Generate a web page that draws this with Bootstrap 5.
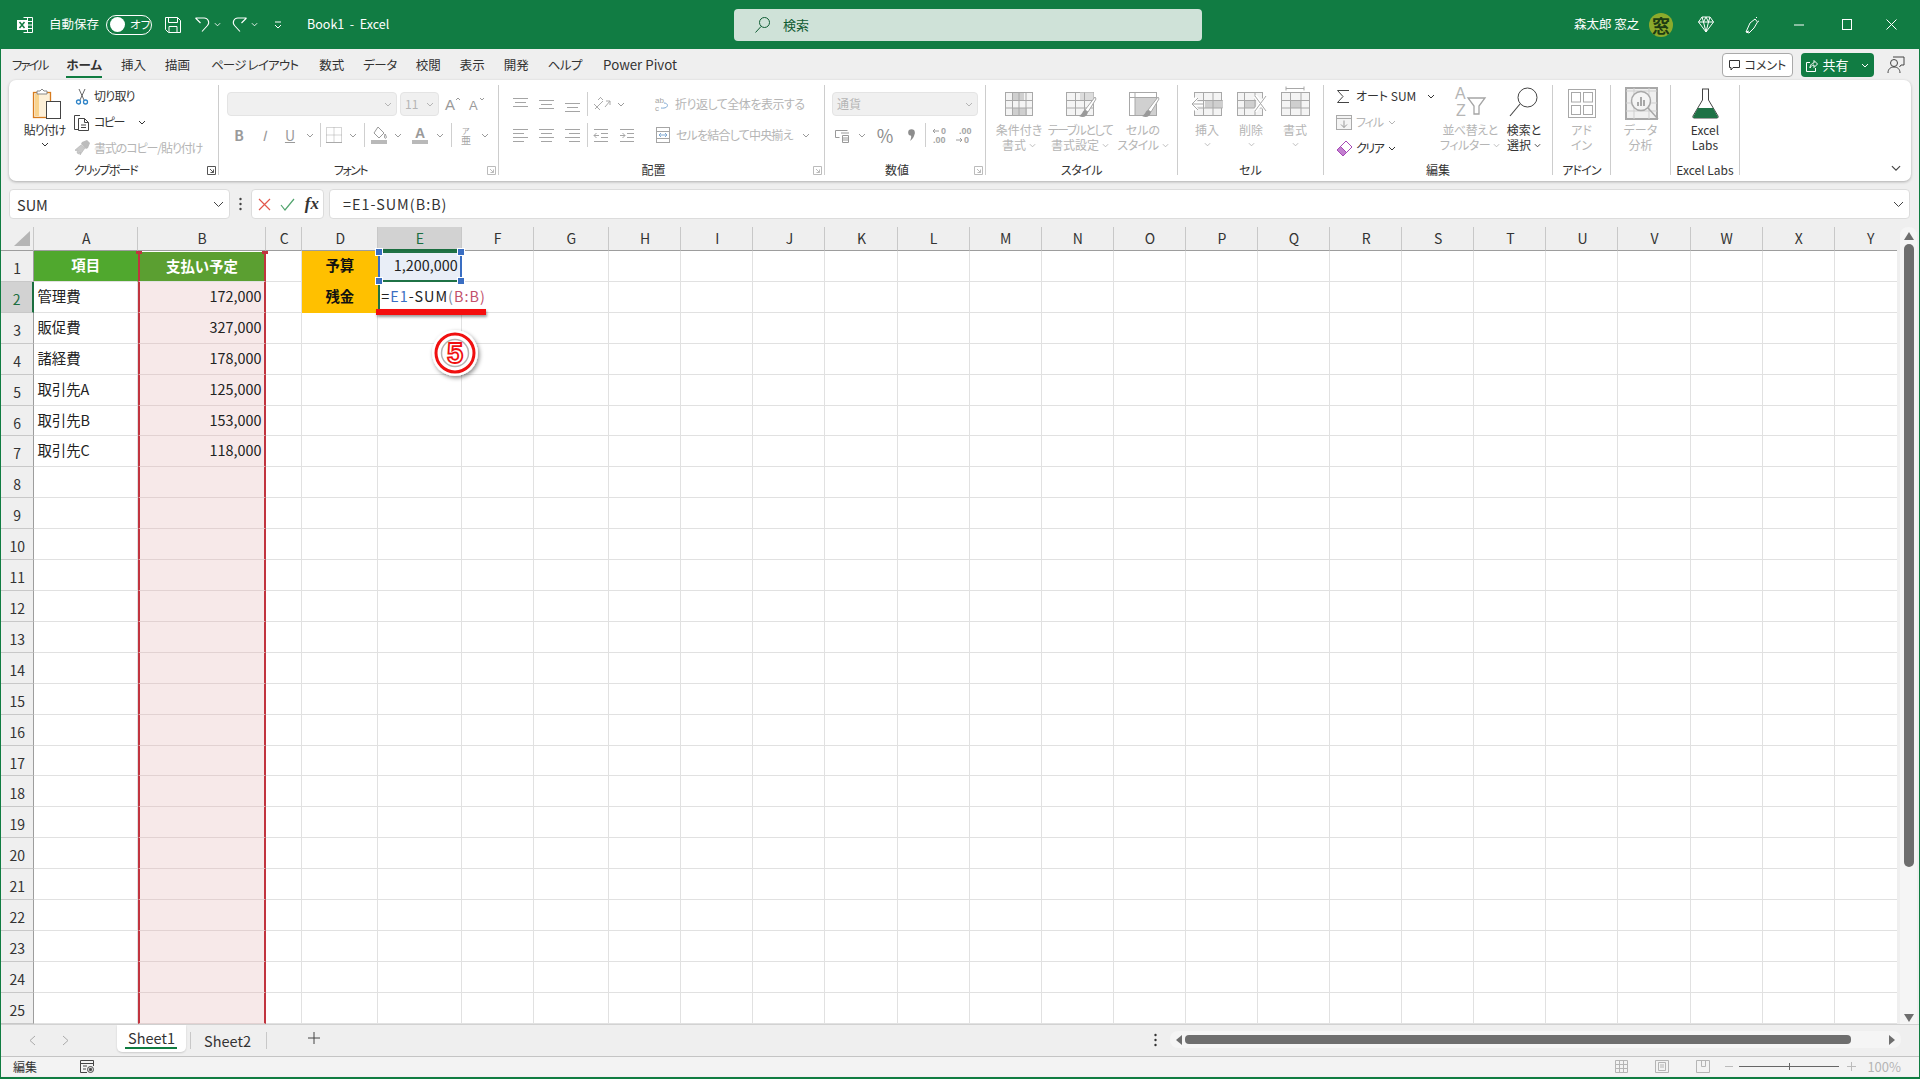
<!DOCTYPE html>
<html lang="ja">
<head>
<meta charset="UTF-8">
<meta name="viewport" content="width=device-width, initial-scale=1">
<title>Book1 - Excel</title>
<link href="https://cdn.jsdelivr.net/npm/bootstrap@5.3.3/dist/css/bootstrap.min.css" rel="stylesheet">
<style>
  html, body { height: 100%; overflow: hidden; }
  body { font-family: "Noto Sans CJK JP", "Noto Sans", sans-serif; font-size: 12.5px; color: #333; background: #efefef; position: relative; }
  svg { display: block; flex-shrink: 0; overflow: visible; }
  .app { height: 1079px; border: 0 solid #107c41; border-width: 0 1px 2px 1px; display: flex; flex-direction: column; }
  .k0 { letter-spacing: -.5px; } .k1 { letter-spacing: -.8px; } .k2 { letter-spacing: -1.1px; } .k3 { letter-spacing: -1.5px; } .k4 { letter-spacing: -2px; }

  /* title bar */
  .title-bar { height: 49px; background: #117c43; color: #fff; margin: 0 -1px; padding-left: 17px; flex-shrink: 0; font-feature-settings: "palt"; }
  .title-bar .lbl { font-size: 12.5px; }
  .t-auto { margin-left: 16px; }
  .t-toggle { margin-left: 7px; width: 46px; height: 20px; border: 1px solid #fff; border-radius: 10px; padding-left: 3px; gap: 5px; font-size: 11.5px; white-space: nowrap; }
  .t-knob { width: 15px; height: 15px; background: #fff; border-radius: 50%; flex-shrink: 0; }
  .t-save { margin-left: 13px; }
  .t-undo { margin-left: 14px; }
  .t-redo { margin-left: 11px; }
  .t-more { margin-left: 16px; }
  .t-name { margin-left: 25px; width: 427px; font-size: 12.5px; white-space: pre; }
  .t-search { width: 468px; height: 32px; background: #cfe2d8; border-radius: 4px; padding-left: 21px; gap: 13px; color: #0f5c33; font-size: 13px; }
  .t-user { margin-left: 372px; font-size: 12.5px; width: 66px; white-space: pre; }
  .t-avatar { width: 24px; height: 24px; border-radius: 50%; background: #8cab2c; color: #1c3b12; font-size: 18px; line-height: 24px; text-align: center; margin-left: 9px; font-weight: 700; overflow: hidden; }
  .t-gem { margin-left: 25px; }
  .t-pen { margin-left: 31px; }
  .t-min { margin-left: 32px; }
  .t-max { margin-left: 35px; }
  .t-close { margin-left: 33px; }

  /* ribbon tabs */
  .tab-row { height: 31px; padding: 1px 0 0 11px; gap: 19px; flex-shrink: 0; font-size: 12.5px; font-feature-settings: "palt"; align-items: center; }
  .tab-on { font-weight: 700; position: relative; }
  .tab-on::after { content: ""; position: absolute; left: 0; right: 0; bottom: -4px; height: 2px; background: #107c41; }
  .tab-wide { margin-left: 2px; }
  .tab-pp { margin-left: 2px; font-size: 13.3px; }
  .tab-btns { margin-left: auto; padding-right: 14px; letter-spacing: 0; }
  .b-comment { width: 71px; height: 24px; background: #fff; border: 1px solid #a9a9a9; border-radius: 4px; gap: 4px; font-size: 12px; justify-content: center; }
  .b-share { width: 73px; height: 24px; background: #117c43; color: #fff; border-radius: 4px; margin-left: 8px; gap: 4px; font-size: 13px; justify-content: center; }
  .b-person { margin-left: 13px; }

  /* ribbon */
  .ribbon { height: 101px; width: 1902px; margin-left: 8px; background: #fff; border-radius: 7px; box-shadow: 0 1px 3px rgba(0,0,0,.28); padding-top: 5px; flex-shrink: 0; font-feature-settings: "palt"; font-size: 12px; }
  .rgroup { height: 90px; border-right: 1px solid #cdcdcd; display: flex; flex-direction: column; flex-shrink: 0; }
  .rbody { flex: 1 1 auto; display: flex; min-height: 0; }
  .rtitle { height: 16px; line-height: 21px; font-size: 12px; text-align: center; color: #333; position: relative; flex-shrink: 0; }
  .has-launch { padding-right: 16px; }
  .launch { position: absolute; right: 2px; top: 7px; }
  .g-clip { width: 210px; } .g-font { width: 280px; } .g-align { width: 326px; } .g-num { width: 161px; }
  .g-style { width: 192px; } .g-cell { width: 146px; } .g-edit { width: 229px; } .g-addin { width: 58px; }
  .g-data { width: 60px; } .g-labs { width: 69px; }
  .off { color: #b5b5b5; }
  .big { display: flex; flex-direction: column; align-items: center; line-height: 15px; margin-top: -2px; flex-shrink: 0; white-space: nowrap; }
  .big-ico { height: 39px; }
  .big .chev { display: inline-block; margin-left: 3px; vertical-align: 2px; }
  .big > .chev { margin: 5px 0 0; }
  .w60 { width: 60px; } .w62 { width: 62px; } .w64 { width: 64px; } .w44 { width: 44px; } .w48 { width: 48px; }
  .p-paste { margin-left: 15px; width: 41px; }
  .small-col { margin: -2px 0 0 9px; }
  .small-row { height: 26px; display: flex; align-items: center; white-space: nowrap; }
  .small-row svg:first-child { margin-right: 4px; width: 16px; }
  .rows2 { padding: 7px 0 0 8px; }
  .row1, .row2 { height: 24px; display: flex; align-items: center; white-space: nowrap; }
  .row2 { margin-top: 7px; }
  .combo { height: 24px; background: #f0f0f0; border: 1px solid #e4e4e4; border-radius: 4px; display: flex; align-items: center; justify-content: space-between; padding: 0 4px; color: #b5b5b5; }
  .combo-name { width: 170px; justify-content: flex-end; } .combo-size { width: 39px; margin-left: 3px; } .combo-num { width: 146px; }
  .ib { display: flex; align-items: center; justify-content: center; flex-shrink: 0; color: #9a9a9a; font-weight: 700; font-size: 14px; }
  .txt-pct { font-size: 18px; color: #8d8d8d; }
  .bw10 { width: 10px; } .bw12 { width: 12px; } .bw14 { width: 14px; } .bw18 { width: 18px; } .bw20 { width: 20px; }
  .bw24 { width: 24px; } .bw26 { width: 26px; } .bw28 { width: 28px; } .bw30 { width: 30px; }
  .vsep { width: 1px; height: 24px; background: #cfcfcf; flex-shrink: 0; }
  .ml2 { margin-left: 2px; } .ml3 { margin-left: 3px; } .ml5 { margin-left: 5px; } .ml6 { margin-left: 6px; } .ml16 { margin-left: 16px; } .ml29 { margin-left: 29px; }
  .g-align .rows2 { padding-left: 8px; }
  .g-num .rows2 { padding-left: 7px; }
  .g-style .rbody { padding-left: 3px; } .g-cell .rbody { padding-left: 7px; }
  .e-left { margin: -2px 0 0 12px; width: 110px; flex-shrink: 0; }
  .rib-collapse { margin: 80px 0 0 auto; padding-right: 0; transform: translateX(-9px); }
  .e-sum-chev { margin-left: 11px; }
  .c-copy-chev { margin-left: 14px; }
  .tiny-chev { margin-left: 5px; }

  /* formula bar */
  .fbar { height: 30px; margin: 8px 8px 8px 8px; flex-shrink: 0; }
  .fbox { height: 30px; background: #fff; border: 1px solid #dcdcdc; border-radius: 4px; display: flex; align-items: center; }
  .f-name { width: 221px; padding: 1px 5px 0 7px; justify-content: space-between; font-size: 14.5px; }
  .f-dots { width: 21px; }
  .f-btns { width: 73px; justify-content: space-between; padding: 0 4px 0 6px; }
  .f-fx { font-family: "Liberation Serif", serif; font-style: italic; font-weight: 700; font-size: 17px; }
  .f-main { width: 1581px; margin-left: 5px; padding: 0 5px 0 13px; justify-content: space-between; font-size: 14.4px; letter-spacing: 1px; }

  /* sheet */
  .sheet-wrap { height: 797px; flex-shrink: 0; }
  .sheet { width: 1896px; height: 797px; overflow: hidden; background: #fff; display: grid; grid-auto-rows: 30.92px; grid-template-rows: 24px;
    grid-template-columns: 33.4px 103.6px 128px 36.3px 76px 83.4px 72px 75.5px repeat(18, 72.1px); font-size: 14.4px; color: #222; }
  .sc { border-right: 1px solid #e1e1e1; border-bottom: 1px solid #e1e1e1; padding: 0 3px; line-height: 28px; white-space: nowrap; position: relative; }
  .hc { background: #efefef; border-right: 1px solid #c8c8c8; border-bottom: 1px solid #9d9d9d; line-height: 22px; padding: 0 0 0 1px; text-align: center; font-size: 14px; color: #333; }
  .hr { background: #efefef; border-right: 1px solid #9d9d9d; border-bottom: 1px solid #c8c8c8; line-height: 34px; padding: 0; text-align: center; font-size: 14px; color: #333; }
  .hsel { background: #d2d2d2; color: #1b6e40; }
  .hc.hsel { border-bottom: 2px solid #1b6e40; }
  .hr.hsel { border-right: 2px solid #1b6e40; }
  .corner { display: flex; align-items: flex-end; justify-content: flex-end; padding: 0 3px 4px 0; }
  .colb { background: #f7e9e9; border-left: 2px solid #c1343f; border-right: 2px solid #c1343f; border-bottom-color: #e2d2d2; text-align: right; padding-right: 2.500px; }
  .numr { text-align: right; padding-right: 1px; }
  .hd-a { background: #50a82e; color: #fff; font-weight: 700; text-align: center; border-right-color: #50a82e; }
  .hd-b { background: #5b9f31; color: #fff; font-weight: 700; text-align: center; border-top: 1px solid #fff; border-left: 2px solid #c1343f; border-right: 2px solid #c1343f; }
  .hd-b::before, .hd-b::after { content: ""; position: absolute; top: -1px; width: 6px; height: 3px; background: #c1343f; }
  .hd-b::before { left: -4px; } .hd-b::after { right: -4px; }
  .yel { background: #ffc000; color: #111; font-weight: 700; text-align: center; border-color: #ffc000; }
  .e-ref { background: #e9eef7; border-left: 2px solid #3a6ec2; border-right: 2px solid #3a6ec2; border-top: 2px solid #1f7246; border-bottom: 2px solid #1f7246; padding-right: 2px; line-height: 24px; }
  .dot { position: absolute; width: 6px; height: 6px; background: #3a6ec2; outline: 1px solid #fff; z-index: 3; }
  .d-tl { left: -4px; top: -4px; } .d-tr { right: -4px; top: -4px; } .d-bl { left: -4px; bottom: -4px; } .d-br { right: -4px; bottom: -4px; }
  .e-edit { border-left: 2px solid #1f7246; border-right: 0; padding-left: 1px; letter-spacing: 1px; z-index: 2; overflow: visible; }
  .f-blue { color: #3a6ec2; } .f-red { color: #c2506b; } .f-gray { color: #7d8aa0; }

  .vscroll { width: 17px; height: 797px; margin-left: 3px; background: #f5f5f5; border-radius: 8px 8px 0 0; align-items: center; padding-top: 5px; }
  .vthumb { width: 10px; height: 623px; background: #6e6e6e; border-radius: 5px; margin-top: 4px; }
  .varrow-down { margin-top: auto; margin-bottom: 2px; }

  /* sheet tabs */
  .tabs-bar { height: 32px; border-top: 1px solid #d2d2d2; background: #efefef; flex-shrink: 0; font-size: 14.500px; }
  .tb-nav { margin-left: 28px; gap: 26px; width: 88px; }
  .sheet-on { width: 69px; height: 27px; background: #fff; border-radius: 0 0 5px 5px; text-align: center; position: relative; line-height: 26px; box-shadow: 0 1px 2px rgba(0,0,0,.15); }
  .sheet-on::after { content: ""; position: absolute; left: 8px; right: 9px; bottom: 3px; height: 2px; background: #107c41; }
  .tb-sep { width: 1px; height: 17px; background: #c8c8c8; margin-top: 7px; }
  .sheet-off { width: 75px; text-align: center; line-height: 31px; padding-right: 2px; }
  .tb-plus { margin: 7px 0 0 41px; }
  .tb-dots { margin: 8px 0 0 834px; }
  .h-track { width: 731px; height: 17px; margin: 6px 0 0 13px; background: #f5f5f5; border-radius: 8px; padding: 0 6px; }
  .h-thumb { width: 666px; height: 9px; background: #6e6e6e; border-radius: 4px; margin: 0 auto 0 3px; }

  /* status bar */
  .status-bar { height: 20px; background: #f3f3f3; border-top: 1px solid #c4c4c4; flex-shrink: 0; padding-left: 12px; font-size: 12px; }
  .st-macro { margin-left: 43px; }
  .st-right { margin-left: auto; padding-right: 18px; color: #b5b5b5; }
  .st-right svg + svg { margin-left: 27px; }
  .st-minus { width: 8px; height: 1px; background: #bbb; margin: 0 6px 0 15px; }
  .st-slider { width: 100px; height: 1px; background: #666; position: relative; }
  .st-slider::after { content: ""; position: absolute; left: 50px; top: -3px; width: 1px; height: 7px; background: #666; }
  .st-pct { margin-left: 11px; font-size: 13px; }

  /* annotation */
  .note-bar { position: absolute; left: 376px; top: 309px; width: 110px; height: 6px; background: #f50d0d; box-shadow: 1px 2px 3px rgba(0,0,0,.4); z-index: 5; }
  .note-num { position: absolute; left: 430px; top: 328px; z-index: 5; }
</style>
</head>
<body>
<svg width="0" height="0" class="position-absolute">
  <symbol id="chev" viewBox="0 0 8 5"><path d="M1 1l3 3 3-3" fill="none" stroke="currentColor" stroke-width="1"/></symbol>
  <symbol id="launch" viewBox="0 0 9 9"><path d="M.5 8.500v-8h8v8zM3 3l3.500 3.500M6.500 3.500v3h-3" fill="none" stroke="currentColor"/></symbol>
</svg>

<div class="app">
  <!-- barra de titulo -->
  <header class="title-bar d-flex align-items-center">
    <svg width="16" height="16" viewBox="0 0 16 16"><path d="M6.500.5h9v15h-9M10.500.500v15M6.500 4.500h9M6.500 8h9M6.500 11.500h9" fill="none" stroke="#fff"/><rect y="3" width="10" height="10" fill="#fff"/><path d="M2.500 5l5 6M7.500 5l-5 6" stroke="#117c43" stroke-width="1.500"/></svg>
    <span class="lbl t-auto">自動保存</span>
    <span class="t-toggle d-flex align-items-center"><span class="t-knob"></span><span>オフ</span></span>
    <svg class="t-save" width="16" height="16" viewBox="0 0 16 16" fill="none" stroke="#fff"><path d="M.5.5h12l3 3v12h-12l-3-3zM3.500.5v5h9v-5M4 15.500v-6h8v6"/></svg>
    <svg class="t-undo" width="15" height="15" viewBox="0 0 15 15" fill="none" stroke="#fff" stroke-width="1.100"><path d="M.5 1H9a4.500 4.500 0 0 1 3.500 7.500L7 14.500M.5 1l5 5"/></svg>
    <svg class="ms-1 text-white" width="7" height="5"><use href="#chev"/></svg>
    <svg class="t-redo" width="15" height="15" viewBox="0 0 15 15" fill="none" stroke="#fff" stroke-width="1.100"><path d="M14.500 1H6a4.500 4.500 0 0 0-3.500 7.500L8 14.500M14.500 1l-5 5"/></svg>
    <svg class="ms-1 text-white" width="7" height="5"><use href="#chev"/></svg>
    <svg class="t-more text-white" width="8" height="8" viewBox="0 0 8 8"><path d="M1 1h6" stroke="#fff"/><use href="#chev" y="3" width="8" height="5"/></svg>
    <span class="t-name">Book1  -  Excel</span>
    <div class="t-search d-flex align-items-center">
      <svg width="15" height="16" viewBox="0 0 15 16" fill="none" stroke="#0f5c33"><circle cx="9.500" cy="5.500" r="5"/><path d="M6 9.500L.5 15.500"/></svg>
      <span>検索</span>
    </div>
    <span class="t-user">森太郎 窓之</span>
    <span class="t-avatar">窓</span>
    <svg class="t-gem" width="16" height="17" viewBox="0 0 16 17" fill="none" stroke="#fff"><path d="M4 1h8l3.500 5L8 16 .5 6zM.5 6h15M5.500 6L8 16l2.500-10M4 1l1.500 5L8 1l2.500 5L12 1"/></svg>
    <svg class="t-pen" width="15" height="18" viewBox="0 0 15 18" fill="none" stroke="#fff"><path d="M5 7l5-4 2.500 3L9 12l-5 5-3-1zM1 16l3-1M11 1l1 1M14 5l-1 .5"/></svg>
    <svg class="t-min" width="15" height="2"><path d="M2 1h10" stroke="#fff"/></svg>
    <svg class="t-max" width="11" height="11"><rect x=".5" y=".5" width="9" height="10" fill="none" stroke="#fff"/></svg>
    <svg class="t-close" width="11" height="11"><path d="M.5.5l10 10M10.500.5l-10 10" stroke="#fff"/></svg>
  </header>

  <!-- pestañas -->
  <nav class="tab-row d-flex">
    <span class="k4">ファイル</span><span class="tab-on">ホーム</span><span>挿入</span><span>描画</span><span class="k1 tab-wide">ページ レイアウト</span><span class="tab-wide">数式</span><span class="k0">データ</span><span>校閲</span><span>表示</span><span>開発</span><span class="k0">ヘルプ</span><span class="tab-pp">Power Pivot</span>
    <div class="tab-btns d-flex align-items-center">
      <span class="b-comment d-flex align-items-center"><svg width="12" height="12" viewBox="0 0 12 12" fill="none" stroke="#333"><path d="M.5 1.500h10v7H4L2 11V8.500H.5z"/></svg>コメント</span>
      <span class="b-share d-flex align-items-center"><svg width="12" height="13" viewBox="0 0 12 13" fill="none" stroke="#fff"><path d="M4 3.500H.5v9h9V9M4 9c0-4 3-5 4-5V1.500L11.500 5 8 8.500V6C6 6 5 7 4 9z"/></svg>共有<svg class="ms-2" width="8" height="5"><use href="#chev"/></svg></span>
      <svg class="b-person" width="18" height="18" viewBox="0 0 18 18" fill="none" stroke="#444"><circle cx="7" cy="7" r="3.500"/><path d="M1 17c0-4 2.500-6 6-6s6 2 6 6M6 1h11v8h-3l-1.500 2"/></svg>
    </div>
  </nav>

  <!-- cinta -->
  <section class="ribbon d-flex">
    <div class="rgroup g-clip">
      <div class="rbody">
        <div class="big p-paste">
          <svg class="big-ico" width="40" height="39" viewBox="0 0 40 39"><rect x="8.500" y="9.500" width="17" height="25" fill="#fdf0d8" stroke="#d77b1e" stroke-width="1.300"/><rect x="10" y="11" width="4" height="22" fill="#f9d38e"/><path d="M12 11v-3h3l2-2 2 2h3v3z" fill="#fff" stroke="#888"/><rect x="21.500" y="18.500" width="14" height="17" fill="#fff" stroke="#444"/></svg>
          <span class="k2">貼り付け</span>
          <svg class="chev" width="8" height="5"><use href="#chev"/></svg>
        </div>
        <div class="small-col">
          <div class="small-row"><svg height="17" viewBox="0 0 16 17" fill="none"><path d="M5 1l5 11M11 1L6 12" stroke="#666"/><circle cx="4.500" cy="14" r="2" stroke="#2e83c7" stroke-width="1.300"/><circle cx="11.500" cy="14" r="2" stroke="#2e83c7" stroke-width="1.300"/></svg><span class="k1">切り取り</span></div>
          <div class="small-row"><svg height="17" viewBox="0 0 16 17" fill="none" stroke="#444"><path d="M4 15.500H.5V1.500H6"/><path d="M4.500 4.500h6l4 4v8h-10zM10.500 4.500v4h4M7 11h5M7 13.500h5"/></svg><span class="k3">コピー</span><svg class="c-copy-chev" width="8" height="5"><use href="#chev"/></svg></div>
          <div class="small-row off"><svg height="16" viewBox="0 0 16 16"><path d="M8 2l5-2 3 3-2 5-2 1-5-5z" fill="#bcbcbc"/><path d="M7 5L1 10l1 1 2-1-1 3 2 1 1-2 0 3 5-7z" fill="#c9c9c9" stroke="#aaa" stroke-width=".5"/></svg><span class="k2">書式のコピー/貼り付け</span></div>
        </div>
      </div>
      <div class="rtitle has-launch k3">クリップボード<svg class="launch" width="9" height="9" color="#555"><use href="#launch"/></svg></div>
    </div>

    <div class="rgroup g-font">
      <div class="rbody rows2 flex-column">
        <div class="row1">
          <span class="combo combo-name"><svg width="8" height="5"><use href="#chev"/></svg></span>
          <span class="combo combo-size">11<svg width="8" height="5"><use href="#chev"/></svg></span>
          <svg class="ml6" width="16" height="16" viewBox="0 0 16 16"><text x="0" y="14" font-size="15" fill="#9a9a9a" font-family="Liberation Sans">A</text><path d="M11 4l2-2 2 2" fill="none" stroke="#999"/></svg>
          <svg class="ml6 ms-2" width="16" height="16" viewBox="0 0 16 16"><text x="0" y="14" font-size="13" fill="#9a9a9a" font-family="Liberation Sans">A</text><path d="M11 2l2 2 2-2" fill="none" stroke="#999"/></svg>
        </div>
        <div class="row2">
          <span class="ib bw24">B</span>
          <span class="ib bw26 fst-italic fw-normal">I</span>
          <span class="ib bw26 fw-normal text-decoration-underline">U</span>
          <span class="ib bw14"><svg width="8" height="5"><use href="#chev"/></svg></span>
          <span class="vsep ml3"></span>
          <span class="ib bw26"><svg width="16" height="16" viewBox="0 0 16 16" fill="none" stroke="#aaa" stroke-dasharray="1 1"><rect x=".5" y=".5" width="15" height="15"/><path d="M8 .5v15M.5 8h15"/><path d="M0 15.500h16" stroke-dasharray="none"/></svg></span>
          <span class="ib bw12"><svg width="8" height="5"><use href="#chev"/></svg></span>
          <span class="vsep ml5"></span>
          <span class="ib bw28"><svg width="17" height="18" viewBox="0 0 17 18"><path d="M7 1l6 6-5 5-5-5zM14 8c1 2 2 3 1 4s-2 0-1-4" fill="none" stroke="#999"/><rect y="14" width="16" height="4" fill="#b9b9b9"/></svg></span>
          <span class="ib bw10"><svg width="8" height="5"><use href="#chev"/></svg></span>
          <span class="ib bw30 ml2"><svg width="16" height="18" viewBox="0 0 16 18"><text x="3" y="12" font-size="14" fill="#9a9a9a" font-family="Liberation Sans">A</text><rect y="14" width="16" height="4" fill="#b9b9b9"/></svg></span>
          <span class="ib bw10"><svg width="8" height="5"><use href="#chev"/></svg></span>
          <span class="vsep ml6"></span>
          <span class="ib bw28 fw-normal"><svg width="10" height="17" viewBox="0 0 10 17"><text x="1" y="7" font-size="8" fill="#a5a5a5" font-family="Noto Sans CJK JP">ア</text><text x="0" y="17" font-size="10" fill="#a5a5a5" font-family="Noto Sans CJK JP">亜</text></svg></span>
          <span class="ib bw10"><svg width="8" height="5"><use href="#chev"/></svg></span>
        </div>
      </div>
      <div class="rtitle has-launch k3">フォント<svg class="launch" width="9" height="9" color="#bbb"><use href="#launch"/></svg></div>
    </div>

    <div class="rgroup g-align">
      <div class="rbody rows2 flex-column">
        <div class="row1">
          <span class="ib bw26"><svg width="15" height="16" stroke="#a5a5a5"><path d="M0 2.500h15M2 6.500h11M0 10.500h15"/></svg></span>
          <span class="ib bw26"><svg width="15" height="16" stroke="#a5a5a5"><path d="M0 4.500h15M2 8.500h11M0 12.500h15"/></svg></span>
          <span class="ib bw26"><svg width="15" height="16" stroke="#a5a5a5"><path d="M0 7.500h15M2 11.500h11M0 15.500h15"/></svg></span>
          <span class="vsep ml2"></span>
          <span class="ib bw28"><svg width="18" height="18" viewBox="0 0 18 18" fill="none" stroke="#aaa"><path d="M2 14L10 6M1 9l6 6M7 2l3 3M5 5l3-3M12 12l5-6M17 6l-4 0M17 6v4"/></svg></span>
          <span class="ib bw10"><svg width="8" height="5"><use href="#chev"/></svg></span>
          <svg class="ml29" width="14" height="16" viewBox="0 0 14 16"><text x="0" y="7" font-size="8" fill="#a5a5a5" font-family="Liberation Sans">ab</text><text x="0" y="15" font-size="8" fill="#a5a5a5" font-family="Liberation Sans">c</text><path d="M6 12c8 1 8-5 3-5" fill="none" stroke="#7fa9d4"/></svg>
          <span class="off ml6 k0">折り返して全体を表示する</span>
        </div>
        <div class="row2">
          <span class="ib bw26"><svg width="15" height="16" stroke="#a5a5a5"><path d="M0 2.500h15M0 6.500h11M0 10.500h15M0 14.500h11"/></svg></span>
          <span class="ib bw26"><svg width="15" height="16" stroke="#a5a5a5"><path d="M0 2.500h15M2 6.500h11M0 10.500h15M2 14.500h11"/></svg></span>
          <span class="ib bw26"><svg width="15" height="16" stroke="#a5a5a5"><path d="M0 2.500h15M4 6.500h11M0 10.500h15M4 14.500h11"/></svg></span>
          <span class="vsep ml2"></span>
          <span class="ib bw26"><svg width="14" height="14" stroke="#a5a5a5" fill="none"><path d="M0 1.500h14M7 5.500h7M7 9.500h7M0 13.500h14M5 7.500H0M2.500 5l-2.500 2.500 2.500 2.500"/></svg></span>
          <span class="ib bw26"><svg width="14" height="14" stroke="#a5a5a5" fill="none"><path d="M0 1.500h14M7 5.500h7M7 9.500h7M0 13.500h14M0 7.500h5M2.500 5l2.500 2.500-2.500 2.500"/></svg></span>
          <svg class="ml16" width="14" height="16" viewBox="0 0 14 16" fill="none" stroke="#a5a5a5"><rect x=".5" y=".5" width="13" height="15"/><path d="M.5 4.500h13M.5 11.500h13"/><path d="M3 8h8M3 8l2-2M3 8l2 2M11 8l-2-2M11 8l-2 2" stroke="#7fa9d4"/></svg>
          <span class="off ml6 k1">セルを結合して中央揃え</span>
          <span class="ib bw20 ml3"><svg width="8" height="5"><use href="#chev"/></svg></span>
        </div>
      </div>
      <div class="rtitle has-launch">配置<svg class="launch" width="9" height="9" color="#bbb"><use href="#launch"/></svg></div>
    </div>

    <div class="rgroup g-num">
      <div class="rbody rows2 flex-column">
        <div class="row1"><span class="combo combo-num">通貨<svg width="8" height="5"><use href="#chev"/></svg></span></div>
        <div class="row2">
          <span class="ib bw20"><svg width="15" height="15" viewBox="0 0 15 15" fill="none" stroke="#999"><path d="M.5 2.500h12M.5 2.500v7h4M6 5h8M7.500 7.500h6v7h-6zM7.500 10h6M7.500 12h6"/></svg></span>
          <span class="ib bw10 ml5"><svg width="8" height="5"><use href="#chev"/></svg></span>
          <span class="ib bw24 ml6 fw-normal txt-pct">%</span>
          <span class="ib bw28"><svg width="7" height="12" viewBox="0 0 7 12"><circle cx="3.500" cy="3.500" r="3.300" fill="#8d8d8d"/><path d="M6.500 4c0 4-2 6-4.500 8 1-2 1.500-4 1-6z" fill="#8d8d8d"/></svg></span>
          <span class="vsep"></span>
          <span class="ib bw18 ml6"><svg width="18" height="20" viewBox="0 0 18 20"><path d="M7 6H1M3 4L1 6l2 2" fill="none" stroke="#9c9c9c"/><text x="9" y="9" font-size="9" fill="#a5a5a5" font-family="Liberation Sans">0</text><text x="1" y="18" font-size="9" fill="#a5a5a5" font-family="Liberation Sans">.00</text></svg></span>
          <span class="ib bw18 ml5"><svg width="18" height="20" viewBox="0 0 18 20"><text x="4" y="9" font-size="9" fill="#a5a5a5" font-family="Liberation Sans">.00</text><path d="M1 15h6M5 13l2 2-2 2" fill="none" stroke="#9c9c9c"/><text x="9" y="18" font-size="9" fill="#a5a5a5" font-family="Liberation Sans">0</text></svg></span>
        </div>
      </div>
      <div class="rtitle has-launch">数値<svg class="launch" width="9" height="9" color="#bbb"><use href="#launch"/></svg></div>
    </div>

    <div class="rgroup g-style">
      <div class="rbody off">
        <div class="big w60">
          <svg class="big-ico" width="40" height="39" viewBox="0 0 40 39" fill="none" stroke="#a8a8a8"><rect x="6.500" y="9.500" width="27" height="23" fill="#f4f4f4"/><path d="M13 10h12v8H13zM13 25h15v7H13z" fill="#cfcfcf" stroke="none"/><path d="M6.500 17.500h27M6.500 25h27M13.500 9.500v23M20 9.500v23M27 9.500v23"/></svg>
          <span>条件付き</span><span>書式<svg class="chev" width="7" height="5"><use href="#chev"/></svg></span>
        </div>
        <div class="big w62">
          <svg class="big-ico" width="40" height="39" viewBox="0 0 40 39" fill="none" stroke="#a8a8a8"><rect x="6.500" y="9.500" width="27" height="23" fill="#f4f4f4"/><path d="M20 9.500h13.500V18H20z" fill="#dcdcdc" stroke="none"/><path d="M6.500 17.500h27M6.500 25h27M15.500 9.500v23M24.500 9.500v23"/><path d="M35 14L25 27l3 2 8-13z" fill="#fff"/><path d="M25 27c-3 1-2 4-6 6 4 2 8 1 9-4z" fill="#999" stroke="none"/></svg>
          <span class="k3">テーブルとして</span><span>書式設定<svg class="chev" width="7" height="5"><use href="#chev"/></svg></span>
        </div>
        <div class="big w64">
          <svg class="big-ico" width="40" height="39" viewBox="0 0 40 39" fill="none" stroke="#a8a8a8"><rect x="6.500" y="9.500" width="27" height="23" fill="#fff"/><path d="M12 15h21v17H12z" fill="#d0d0d0" stroke="none"/><path d="M6.500 14.500h27M12 9.500v23"/><path d="M35 14L25 27l3 2 8-13z" fill="#fff"/><path d="M25 27c-3 1-2 4-6 6 4 2 8 1 9-4z" fill="#999" stroke="none"/></svg>
          <span>セルの</span><span class="k0">スタイル<svg class="chev" width="7" height="5"><use href="#chev"/></svg></span>
        </div>
      </div>
      <div class="rtitle k0">スタイル</div>
    </div>

    <div class="rgroup g-cell">
      <div class="rbody off">
        <div class="big w44">
          <svg class="big-ico" width="40" height="39" viewBox="0 0 40 39" fill="none" stroke="#a8a8a8"><rect x="7.500" y="9.500" width="27" height="23" fill="#f4f4f4"/><path d="M18 17h18v8H18z" fill="#cfcfcf" stroke="none"/><path d="M7.500 17.500h28M7.500 25h28M16.500 9.500v23M26 9.500v23"/><path d="M4 21h12M4 21l6-6M4 21l6 6" stroke="#fff" stroke-width="4"/><path d="M5 21h12M5 21l6-6M5 21l6 6" stroke="#a8a8a8"/></svg>
          <span>挿入</span><svg class="chev" width="7" height="5"><use href="#chev"/></svg>
        </div>
        <div class="big w44">
          <svg class="big-ico" width="40" height="39" viewBox="0 0 40 39" fill="none" stroke="#a8a8a8"><rect x="6.500" y="9.500" width="25" height="23" fill="#f4f4f4"/><path d="M13 17h12v8H13z" fill="#cfcfcf" stroke="none"/><path d="M6.500 17.500h25M6.500 25h25M13.500 9.500v23M24 9.500v23"/><path d="M24 13l12 15M36 13L24 28" stroke="#fff" stroke-width="4"/><path d="M24 13l11 15M35 13L24 28"/></svg>
          <span>削除</span><svg class="chev" width="7" height="5"><use href="#chev"/></svg>
        </div>
        <div class="big w44">
          <svg class="big-ico" width="40" height="39" viewBox="0 0 40 39" fill="none" stroke="#a8a8a8"><path d="M11 5.500h18M11 3.500v4M29 3.500v4"/><rect x="6.500" y="9.500" width="28" height="23" fill="#f4f4f4"/><path d="M15 17h11v8H15z" fill="#cfcfcf" stroke="none"/><path d="M6.500 17.500h28M6.500 25h28M15.500 9.500v23M26 9.500v23"/></svg>
          <span>書式</span><svg class="chev" width="7" height="5"><use href="#chev"/></svg>
        </div>
      </div>
      <div class="rtitle">セル</div>
    </div>

    <div class="rgroup g-edit">
      <div class="rbody">
        <div class="e-left">
          <div class="small-row"><svg height="17" viewBox="0 0 16 17" fill="none" stroke="#444"><path d="M13 2.500H1.500L7 8.500l-5.500 6H13"/></svg><span>オート SUM</span><svg class="e-sum-chev" width="8" height="5"><use href="#chev"/></svg></div>
          <div class="small-row off"><svg height="15" viewBox="0 0 16 15" fill="none" stroke="#aaa"><rect x=".5" y=".5" width="15" height="14" fill="#f4f4f4"/><path d="M.5 3.500h15"/><path d="M8 5.500v7M5 9.500l3 3 3-3" stroke="#999"/></svg><span class="k2">フィル</span><svg class="tiny-chev" width="8" height="5"><use href="#chev"/></svg></div>
          <div class="small-row"><svg height="17" viewBox="0 0 16 17"><path d="M10 1l6 6-9 9-6-6z" fill="#fff" stroke="#a548b5"/><path d="M4.500 6.500l6 6L7 16l-6-6z" fill="#c37fd0" stroke="#a548b5"/></svg><span class="k3">クリア</span><svg class="tiny-chev" width="8" height="5"><use href="#chev"/></svg></div>
        </div>
        <div class="big w48 off">
          <svg class="big-ico" width="40" height="39" viewBox="0 0 40 39" fill="none"><text x="5" y="16" font-size="16" fill="#b5b5b5" font-family="Liberation Sans">A</text><text x="6" y="33" font-size="16" fill="#b5b5b5" font-family="Liberation Sans">Z</text><path d="M18 15h17l-6 8v8h-5v-8z" stroke="#a5a5a5" stroke-width="1.300"/></svg>
          <span class="k0">並べ替えと</span><span class="k0">フィルター<svg class="chev" width="7" height="5"><use href="#chev"/></svg></span>
        </div>
        <div class="big w60">
          <svg class="big-ico" width="40" height="39" viewBox="0 0 40 39" fill="none" stroke="#444"><circle cx="23.500" cy="14.500" r="9.500"/><path d="M16 21L6 33" stroke-width="1.100"/></svg>
          <span>検索と</span><span>選択<svg class="chev" width="7" height="5"><use href="#chev"/></svg></span>
        </div>
      </div>
      <div class="rtitle">編集</div>
    </div>

    <div class="rgroup g-addin">
      <div class="rbody justify-content-center off">
        <div class="big">
          <svg class="big-ico" width="40" height="39" viewBox="0 0 40 39" fill="none" stroke="#a8a8a8"><rect x="6.500" y="6.500" width="27" height="28"/><rect x="9.500" y="9.500" width="9" height="9.500"/><rect x="21.500" y="9.500" width="9" height="9.500"/><rect x="9.500" y="22.500" width="9" height="9"/><rect x="21.500" y="22.500" width="9" height="9"/></svg>
          <span>アド</span><span>イン</span>
        </div>
      </div>
      <div class="rtitle k1">アドイン</div>
    </div>

    <div class="rgroup g-data">
      <div class="rbody justify-content-center off">
        <div class="big">
          <svg class="big-ico" width="40" height="39" viewBox="0 0 40 39" fill="none"><rect x="5" y="5" width="31" height="31" fill="#f0f0f0" stroke="#a8a8a8" stroke-width="2"/><path d="M5 8h31M5 20h31M5 28h31M13 5v31M28 5v31" stroke="#cfcfcf"/><circle cx="20" cy="18" r="9.500" fill="#f4f4f4" stroke="#a8a8a8" stroke-width="1.500"/><path d="M16 23v-4h2v4zM19 23v-9h2v9zM22 23v-6h2v6z" fill="#a8a8a8"/><path d="M27 25l10 11" stroke="#a8a8a8" stroke-width="1.500"/></svg>
          <span>データ</span><span>分析</span>
        </div>
      </div>
      <div class="rtitle"></div>
    </div>

    <div class="rgroup g-labs">
      <div class="rbody justify-content-center">
        <div class="big">
          <svg class="big-ico" width="40" height="39" viewBox="0 0 40 39" fill="none" stroke="#444"><path d="M17 6h7M17.500 6v11L8 33c-.5 1 0 2 1 2h23c1 0 1.500-1 1-2L23.500 17V6"/><path d="M13 25h15l5 9c0 .5-.5 1-1 1H9c-.5 0-1-.5-1-1z" fill="#1f7246" stroke="none"/></svg>
          <span>Excel</span><span>Labs</span>
        </div>
      </div>
      <div class="rtitle text-nowrap">Excel Labs</div>
    </div>

    <svg class="rib-collapse" width="12" height="7" viewBox="0 0 9 6"><path d="M1 1l3.500 3.500L8 1" fill="none" stroke="#444"/></svg>
  </section>

  <!-- barra de formulas -->
  <div class="fbar d-flex">
    <div class="fbox f-name"><span>SUM</span><svg width="11" height="7" viewBox="0 0 11 7"><path d="M1 1l4.500 4.500L10 1" fill="none" stroke="#444"/></svg></div>
    <div class="f-dots d-flex align-items-center justify-content-center"><svg width="3" height="14"><circle cx="1.500" cy="2" r="1.200" fill="#444"/><circle cx="1.500" cy="7" r="1.200" fill="#444"/><circle cx="1.500" cy="12" r="1.200" fill="#444"/></svg></div>
    <div class="fbox f-btns">
      <svg width="13" height="13"><path d="M1 1l11 11M12 1L1 12" stroke="#e2574c" stroke-width="1.200"/></svg>
      <svg width="15" height="13"><path d="M1 7l4 5L14 1" fill="none" stroke="#52a46e" stroke-width="1.200"/></svg>
      <span class="f-fx">fx</span>
    </div>
    <div class="fbox f-main"><span>=E1-SUM(B:B)</span><svg width="11" height="7" viewBox="0 0 11 7"><path d="M1 1l4.500 4.500L10 1" fill="none" stroke="#444"/></svg></div>
  </div>

  <!-- hoja -->
  <div class="sheet-wrap d-flex">
    <div class="sheet" id="sheet"></div>
    <div class="vscroll d-flex flex-column">
      <svg width="10" height="8"><path d="M5 0l5 8H0z" fill="#6e6e6e"/></svg>
      <div class="vthumb"></div>
      <svg class="varrow-down" width="10" height="8"><path d="M5 8l5-8H0z" fill="#6e6e6e"/></svg>
    </div>
  </div>

  <!-- pestañas de hojas -->
  <div class="tabs-bar d-flex">
    <div class="tb-nav d-flex align-items-center"><svg width="7" height="11"><path d="M6 1L1 5.500 6 10" fill="none" stroke="#aaa"/></svg><svg width="7" height="11"><path d="M1 1l5 4.500L1 10" fill="none" stroke="#aaa"/></svg></div>
    <div class="sheet-on">Sheet1</div>
    <div class="tb-sep ms-1"></div>
    <div class="sheet-off">Sheet2</div>
    <div class="tb-sep"></div>
    <svg class="tb-plus" width="12" height="12"><path d="M6 0v12M0 6h12" stroke="#444"/></svg>
    <svg class="tb-dots" width="3" height="14"><circle cx="1.500" cy="2" r="1.200" fill="#333"/><circle cx="1.500" cy="7" r="1.200" fill="#333"/><circle cx="1.500" cy="12" r="1.200" fill="#333"/></svg>
    <div class="h-track d-flex align-items-center">
      <svg width="6" height="10"><path d="M0 5l6-5v10z" fill="#6e6e6e"/></svg>
      <div class="h-thumb"></div>
      <svg width="6" height="10"><path d="M6 5L0 0v10z" fill="#6e6e6e"/></svg>
    </div>
  </div>

  <!-- barra de estado -->
  <footer class="status-bar d-flex align-items-center">
    <span>編集</span>
    <svg class="st-macro" width="14" height="13" viewBox="0 0 14 13" fill="none" stroke="#444"><path d="M7 12.500H.5V.5h13V6M.5 3.500h13M3 6h4M3 9h3"/><circle cx="10.500" cy="9.500" r="3"/><circle cx="10.500" cy="9.500" r="1.200" fill="#444"/></svg>
    <div class="st-right d-flex align-items-center">
      <svg width="13" height="13" fill="none" stroke="#b5b5b5"><path d="M.5.500h12v12H.5zM4.500.500v12M8.500.500v12M.5 4.500h12M.5 8.500h12"/></svg>
      <svg width="14" height="13" fill="none" stroke="#b5b5b5"><path d="M.5.500h13v12H.5zM3.500 2.500h7v8h-7zM5 5h4M5 7h4"/></svg>
      <svg width="14" height="13" fill="none" stroke="#b5b5b5"><path d="M.5.500h13v12H.5zM5.500.500v6h4v-6"/></svg>
      <span class="st-minus"></span>
      <span class="st-slider"></span>
      <svg class="ms-2" width="9" height="9"><path d="M4.500 0v9M0 4.500h9" stroke="#bbb"/></svg>
      <span class="st-pct">100%</span>
    </div>
  </footer>
</div>

<!-- anotaciones sobre la hoja -->
<div class="note-bar"></div>
<svg class="note-num" width="50" height="50" viewBox="0 0 50 50">
  <defs><filter id="sh" x="-20%" y="-20%" width="150%" height="150%"><feDropShadow dx="1.500" dy="2" stdDeviation="2" flood-opacity=".45"/></filter></defs>
  <circle cx="25" cy="25" r="23" fill="#fff" filter="url(#sh)"/>
  <circle cx="25" cy="25" r="19" fill="#fff" stroke="#f01010" stroke-width="3"/>
  <circle cx="25" cy="25" r="13.500" fill="none" stroke="#b4b4b4" stroke-width="1.500"/>
  <text x="25" y="35" text-anchor="middle" font-family="Liberation Sans" font-weight="700" font-size="29" fill="#fff" stroke="#f01010" stroke-width="1.800">5</text>
</svg>

<script>
  // DATOS DE LA HOJA
  const columns = 'ABCDEFGHIJKLMNOPQRSTUVWXY'.split('');
  const rowsData = {
    1: { A: '項目', B: '支払い予定', D: '予算', E: '1,200,000' },
    2: { A: '管理費', B: '172,000', D: '残金' },
    3: { A: '販促費', B: '327,000' },
    4: { A: '諸経費', B: '178,000' },
    5: { A: '取引先A', B: '125,000' },
    6: { A: '取引先B', B: '153,000' },
    7: { A: '取引先C', B: '118,000' }
  };
  const sheet = document.getElementById('sheet');

  function addCell(className, html) {
    const cell = document.createElement('div');
    cell.className = className;
    cell.innerHTML = html;
    sheet.appendChild(cell);
  }

  function cellClass(col, row) {
    let name = 'sc';
    if (col === 'B') name += row === 1 ? ' hd-b' : ' colb';
    if (col === 'A' && row === 1) name += ' hd-a';
    if (col === 'D' && row <= 2) name += ' yel';
    if (col === 'E' && row === 1) name += ' e-ref numr';
    if (col === 'E' && row === 2) name += ' e-edit';
    return name;
  }

  // cabecera
  addCell('hc corner', '<svg width="16" height="15"><path d="M16 0v15H0z" fill="#b5b5b5"/></svg>');
  columns.forEach(col => addCell('hc' + (col === 'E' ? ' hsel' : ''), col));

  // filas
  for (let row = 1; row <= 25; row++) {
    addCell('hr' + (row === 2 ? ' hsel' : ''), row);
    columns.forEach(col => {
      let html = (rowsData[row] && rowsData[row][col]) || '';
      if (col === 'E' && row === 1) {
        html += '<i class="dot d-tl"></i><i class="dot d-tr"></i><i class="dot d-bl"></i><i class="dot d-br"></i>';
      }
      if (col === 'E' && row === 2) {
        html = '=<span class="f-blue">E1</span>-SUM<span class="f-gray">(</span><span class="f-red">B:B)</span>';
      }
      addCell(cellClass(col, row), html);
    });
  }
</script>
<script src="https://cdn.jsdelivr.net/npm/bootstrap@5.3.3/dist/js/bootstrap.bundle.min.js"></script>
</body>
</html>
